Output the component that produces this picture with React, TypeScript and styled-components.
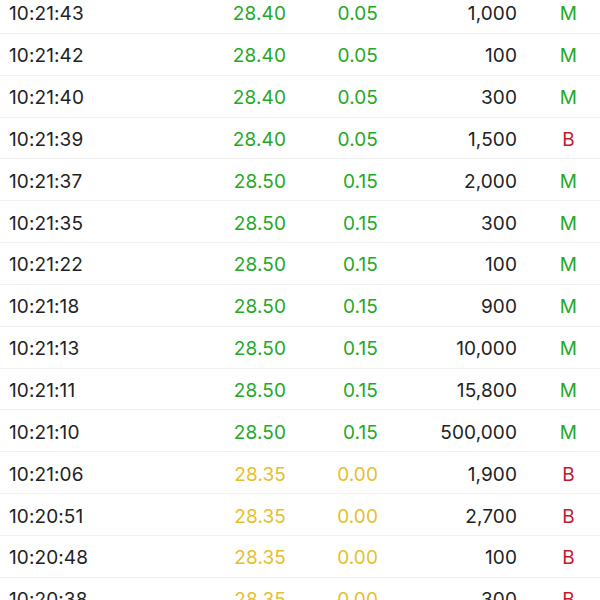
import React from "react";
import styled, { createGlobalStyle } from "styled-components";

const Global = createGlobalStyle`
  html, body { margin: 0; padding: 0; background: #fff; }
  body { font-family: Inter, "Noto Sans", sans-serif; overflow: hidden; }
`;

type Tone = "up" | "flat" | "down";

const colors: Record<Tone, string> = {
  up: "#25a828",
  flat: "#e5bf2b",
  down: "#c3192b",
};

const List = styled.div`
  margin-top: -8px;
  display: flex;
  flex-direction: column;
`;

const Row = styled.div`
  height: 41.85px;
  box-sizing: border-box;
  padding-top: 3px;
  border-bottom: 1px solid #f1f1f1;
  display: grid;
  grid-template-columns: 9px 140px 137px 92px 139px 1fr;
  align-items: center;
  font-size: 19px;
  letter-spacing: 0.1px;
`;

const Time = styled.div`
  grid-column: 2;
  color: #222;
`;

const Num = styled.div<{ $tone?: Tone }>`
  text-align: right;
  color: ${(p) => (p.$tone ? colors[p.$tone] : "#222")};
`;

const Flag = styled.div<{ $tone: Tone }>`
  text-align: center;
  padding-left: 20px;
  color: ${(p) => colors[p.$tone]};
`;

const rows: [string, string, string, string, Tone, "M" | "B"][] = [
  ["10:21:43", "28.40", "0.05", "1,000", "up", "M"],
  ["10:21:42", "28.40", "0.05", "100", "up", "M"],
  ["10:21:40", "28.40", "0.05", "300", "up", "M"],
  ["10:21:39", "28.40", "0.05", "1,500", "up", "B"],
  ["10:21:37", "28.50", "0.15", "2,000", "up", "M"],
  ["10:21:35", "28.50", "0.15", "300", "up", "M"],
  ["10:21:22", "28.50", "0.15", "100", "up", "M"],
  ["10:21:18", "28.50", "0.15", "900", "up", "M"],
  ["10:21:13", "28.50", "0.15", "10,000", "up", "M"],
  ["10:21:11", "28.50", "0.15", "15,800", "up", "M"],
  ["10:21:10", "28.50", "0.15", "500,000", "up", "M"],
  ["10:21:06", "28.35", "0.00", "1,900", "flat", "B"],
  ["10:20:51", "28.35", "0.00", "2,700", "flat", "B"],
  ["10:20:48", "28.35", "0.00", "100", "flat", "B"],
  ["10:20:38", "28.35", "0.00", "300", "flat", "B"],
];

export default function App() {
  return (
    <>
      <Global />
      <List>
        {rows.map(([t, p, c, v, tone, f], i) => (
          <Row key={i}>
            <Time>{t}</Time>
            <Num $tone={tone}>{p}</Num>
            <Num $tone={tone}>{c}</Num>
            <Num>{v}</Num>
            <Flag $tone={f === "M" ? "up" : "down"}>{f}</Flag>
          </Row>
        ))}
      </List>
    </>
  );
}
